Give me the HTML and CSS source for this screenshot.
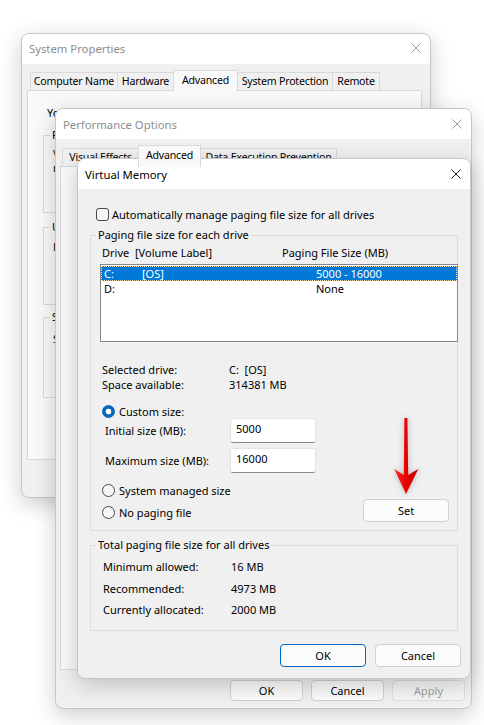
FILE: index.html
```html
<!DOCTYPE html>
<html lang="en">
<head>
  <meta charset="UTF-8">
  <title>Virtual Memory</title>
  <link rel="stylesheet" href="styles.css">
</head>
<body>
<div class="desktop">

  <!-- back window -->
  <div class="window sysprops">
    <div class="titlebar">
      <span class="title">System Properties</span>
      <svg class="close" viewBox="0 0 10 10"><path d="M0.5 0.5L9.5 9.5M9.5 0.5L0.5 9.5"/></svg>
    </div>
    <div class="tabs">
      <div class="tab tab-computer">Computer Name</div>
      <div class="tab tab-hardware">Hardware</div>
      <div class="tab tab-advanced active">Advanced</div>
      <div class="tab tab-protection">System Protection</div>
      <div class="tab tab-remote">Remote</div>
    </div>
    <div class="tab-panel">
      <p class="admin-note">You must be logged on as an Administrator to make most of these changes.</p>
      <fieldset class="sp-group sp-perf">
        <legend>Performance</legend>
        <p>Visual effects, processor scheduling, memory usage, and virtual memory</p>
        <button class="btn">Settings...</button>
      </fieldset>
      <fieldset class="sp-group sp-profiles">
        <legend>User Profiles</legend>
        <p>Desktop settings related to your sign-in</p>
        <button class="btn">Settings...</button>
      </fieldset>
      <fieldset class="sp-group sp-startup">
        <legend>Startup and Recovery</legend>
        <p>System startup, system failure, and debugging information</p>
        <button class="btn">Settings...</button>
      </fieldset>
      <button class="btn env-btn">Environment Variables...</button>
    </div>
    <div class="dlg-buttons">
      <button class="btn">OK</button>
      <button class="btn">Cancel</button>
      <button class="btn" disabled>Apply</button>
    </div>
  </div>

  <!-- middle window -->
  <div class="window perf">
    <div class="titlebar">
      <span class="title">Performance Options</span>
      <svg class="close" viewBox="0 0 10 10"><path d="M0.5 0.5L9.5 9.5M9.5 0.5L0.5 9.5"/></svg>
    </div>
    <div class="tabs">
      <div class="tab tab-visual">Visual Effects</div>
      <div class="tab tab-adv active">Advanced</div>
      <div class="tab tab-dep">Data Execution Prevention</div>
    </div>
    <div class="tab-panel"></div>
    <div class="dlg-buttons">
      <button class="btn">OK</button>
      <button class="btn">Cancel</button>
      <button class="btn" disabled>Apply</button>
    </div>
  </div>

  <!-- front window -->
  <div class="window vmem">
    <div class="titlebar">
      <span class="title">Virtual Memory</span>
      <svg class="close" viewBox="0 0 10 10"><path d="M0.5 0.5L9.5 9.5M9.5 0.5L0.5 9.5"/></svg>
    </div>
    <div class="vm-body">
      <div class="check-row"><span class="checkbox"></span>Automatically manage paging file size for all drives</div>

      <fieldset class="group paging">
        <legend>Paging file size for each drive</legend>
        <div class="list-head"><span>Drive</span><span>[Volume Label]</span><span>Paging File Size (MB)</span></div>
        <div class="listbox">
          <div class="list-row selected"><span>C:</span><span>[OS]</span><span>5000 - 16000</span></div>
          <div class="list-row"><span>D:</span><span></span><span>None</span></div>
        </div>

        <div class="info-row first"><span>Selected drive:</span><span>C:&nbsp; [OS]</span></div>
        <div class="info-row"><span>Space available:</span><span>314381 MB</span></div>

        <div class="radio-row custom"><span class="radio checked"></span>Custom size:</div>
        <div class="field-row"><span>Initial size (MB):</span><div class="textbox">5000</div></div>
        <div class="field-row second"><span>Maximum size (MB):</span><div class="textbox">16000</div></div>
        <div class="radio-row system"><span class="radio"></span>System managed size</div>
        <div class="set-row">
          <div class="radio-row"><span class="radio"></span>No paging file</div>
          <button class="btn big set-btn">Set</button>
        </div>
      </fieldset>

      <fieldset class="group totals">
        <legend>Total paging file size for all drives</legend>
        <div class="total-row"><span>Minimum allowed:</span><span>16 MB</span></div>
        <div class="total-row"><span>Recommended:</span><span>4973 MB</span></div>
        <div class="total-row"><span>Currently allocated:</span><span>2000 MB</span></div>
      </fieldset>

      <div class="vm-buttons">
        <button class="btn big default">OK</button>
        <button class="btn big">Cancel</button>
      </div>
    </div>
  </div>

  <svg class="arrow" viewBox="0 0 28 84">
    <defs>
      <linearGradient id="arrowShade" x1="0" y1="0" x2="1" y2="0">
        <stop offset="0" stop-color="#ff2a2a"/>
        <stop offset="0.5" stop-color="#e80000"/>
        <stop offset="1" stop-color="#c40000"/>
      </linearGradient>
    </defs>
    <polygon points="12.4,4 15.4,4 16.2,61 26.3,55 14,80 2.3,55 11.8,61" fill="url(#arrowShade)"/>
  </svg>

</div>
</body>
</html>
```

FILE: styles.css
```css
* {
  box-sizing: border-box;
}

body {
  margin: 0;
  background: #fff;
  font-family: "Noto Sans", "Segoe UI", "Liberation Sans", sans-serif;
  font-size: 11px;
  color: #000;
}

.desktop {
  position: relative;
  width: 484px;
  height: 725px;
  overflow: hidden;
}

p {
  margin: 0;
}

/* windows */
.window {
  position: absolute;
  display: flex;
  flex-direction: column;
  background: #f0f0f0;
  border: 1px solid #c6c6c6;
  border-radius: 8px;
  overflow: hidden;
  box-shadow: 0 6px 22px rgba(0, 0, 0, 0.2);
}

.sysprops { left: 21px; top: 33px; width: 410px; height: 465px; }
.perf { left: 55px; top: 108px; width: 417px; height: 601px; }
.vmem { left: 77px; top: 158px; width: 394px; height: 521px; }

.titlebar {
  flex: none;
  height: 30px;
  display: flex;
  align-items: center;
  padding: 0 9px 0 7px;
  background: #fff;
}

.sysprops .titlebar { padding-bottom: 2px; }

.title {
  flex: 1;
  font-size: 11.3px;
  color: #8e8e8e;
}

.close {
  width: 10px;
  height: 10px;
  fill: none;
  stroke: #9a9a9a;
  stroke-width: 1;
}

.vmem .title { color: #000; }
.vmem .close { stroke: #1a1a1a; }

/* tabs */
.tabs {
  flex: none;
  display: flex;
  align-items: flex-end;
}

.sysprops .tabs { height: 26px; padding-left: 8px; }
.perf .tabs { height: 27px; padding-left: 6px; }

.tab {
  height: 18px;
  margin-left: -1px;
  border: 1px solid #d9d9d9;
  border-bottom: none;
  background: #f0f0f0;
  text-align: center;
  font-size: 10.6px;
  letter-spacing: -0.2px;
  line-height: 17px;
  white-space: nowrap;
}

.tab:first-child { margin-left: 0; }

.tab.active {
  position: relative;
  z-index: 1;
  height: 21px;
  margin-bottom: -1px;
  background: #f9f9f9;
  line-height: 18px;
}

.perf .tab.active { height: 22px; }

.tab-computer { width: 88px; }
.tab-hardware { width: 57px; }
.tab-advanced { width: 65px; }
.tab-protection { width: 96px; }
.tab-remote { width: 48px; }
.tab-visual { width: 77px; }
.tab-adv { width: 63px; }
.tab-dep { width: 137px; }

.tab-panel {
  flex: none;
  border: 1px solid #d9d9d9;
  background: #f9f9f9;
}

.sysprops .tab-panel {
  height: 370px;
  margin: 0 8px 0 5px;
  padding: 15px 15px 0;
}

.perf .tab-panel {
  height: 504px;
  margin: 0 7px 0 4px;
}

.admin-note {
  margin: 0 0 8px 4px;
  line-height: 14px;
  white-space: nowrap;
}

.sp-group {
  margin: 0;
  padding: 5px 10px 0 9px;
  border: 1px solid #d9d9d9;
  height: 85px;
}

.sp-group legend,
.group legend {
  margin-left: -4px;
  padding: 0 2px;
  line-height: 14px;
}

.sp-group legend { margin-left: -3px; }

.sp-group p { line-height: 14px; }
.sp-profiles { margin-top: 7px; padding-top: 6px; }
.sp-startup { margin-top: 5px; padding-top: 8px; height: 88px; }

.sp-group .btn {
  display: block;
  margin: 12px 0 0 auto;
  width: 75px;
  height: 23px;
}

.env-btn {
  display: block;
  margin: 12px 0 0 auto;
  width: 140px;
  height: 23px;
}

/* buttons */
.btn {
  font: inherit;
  color: #000;
  width: 73px;
  height: 21px;
  padding: 0;
  border: 1px solid #d0d0d0;
  border-radius: 4px;
  background: #fbfbfb;
}

.btn:disabled {
  color: #9d9d9d;
  background: #f5f5f5;
  border-color: #dedede;
}

.btn.big {
  width: 86px;
  height: 23px;
}

.btn.default {
  border-color: #0067c0;
}

.dlg-buttons {
  display: flex;
  justify-content: flex-end;
  gap: 8px;
}

.sysprops .dlg-buttons { margin-top: 7px; padding-right: 8px; }
.perf .dlg-buttons { margin-top: 10px; padding-right: 6px; }

/* virtual memory dialog */
.vm-body {
  padding: 18px 12px 0;
}

.check-row {
  display: flex;
  align-items: center;
  gap: 3px;
  height: 14px;
  margin-left: 6px;
}

.checkbox {
  width: 13px;
  height: 13px;
  border: 1px solid #4a4a4a;
  border-radius: 3px;
  background: #f6f6f6;
}

.group {
  margin: 0;
  min-width: 0;
  border: 1px solid #dcdcdc;
  padding: 4px 0 0 9px;
}

.paging {
  margin-top: 7px;
  padding-bottom: 8px;
}

.list-head {
  display: grid;
  grid-template-columns: 33px 147px auto;
  margin-left: 2px;
  line-height: 14px;
}

.listbox {
  height: 78px;
  margin: 4px -1px 0 0;
  padding: 1px 0;
  border: 1px solid #828790;
  background: #fff;
}

.list-row {
  display: grid;
  grid-template-columns: 38px 174px auto;
  height: 15px;
  line-height: 15px;
  padding-left: 3px;
}

.list-row.selected {
  background: #0078d7;
  color: #fff;
  outline: 1px dotted #f3dca8;
  outline-offset: -1px;
}

.info-row {
  display: grid;
  grid-template-columns: 127px auto;
  margin-left: 2px;
  line-height: 15px;
}

.info-row.first { margin-top: 20px; }

.radio-row {
  display: flex;
  align-items: center;
  gap: 4px;
  height: 14px;
  margin-left: 2px;
}

.radio-row.custom { margin-top: 12px; }
.radio-row.system { margin-top: 10px; }

.radio {
  width: 13px;
  height: 13px;
  border: 1px solid #4a4a4a;
  border-radius: 50%;
  background: #f6f6f6;
}

.radio.checked {
  border-color: #0067c0;
  background: radial-gradient(circle, #fff 2.6px, #0067c0 3.2px);
}

.field-row {
  display: grid;
  grid-template-columns: 125px 86px;
  align-items: center;
  height: 25px;
  margin-left: 5px;
}

.field-row.second { margin-top: 5px; }

.textbox {
  height: 25px;
  padding: 2px 0 0 5px;
  border: 1px solid #e3e3e3;
  border-bottom-color: #8a8a8a;
  border-radius: 3px;
  background: #fff;
  line-height: 16px;
}

.set-row {
  display: flex;
  align-items: flex-start;
  height: 23px;
  margin-top: 2px;
}

.set-row .radio-row { margin-top: 6px; }

.set-btn {
  margin-left: auto;
  margin-right: 8px;
}

.totals {
  margin-top: 7px;
  padding-bottom: 9px;
}

.total-row {
  display: grid;
  grid-template-columns: 128px auto;
  margin-left: 3px;
  line-height: 21.5px;
}

.vm-buttons {
  display: flex;
  justify-content: flex-end;
  gap: 9px;
  margin: 13px -3px 0 0;
}

.arrow {
  position: absolute;
  left: 392px;
  top: 414px;
  width: 28px;
  height: 84px;
  filter: drop-shadow(0 0 3px rgba(0, 0, 0, 0.25));
}
```
